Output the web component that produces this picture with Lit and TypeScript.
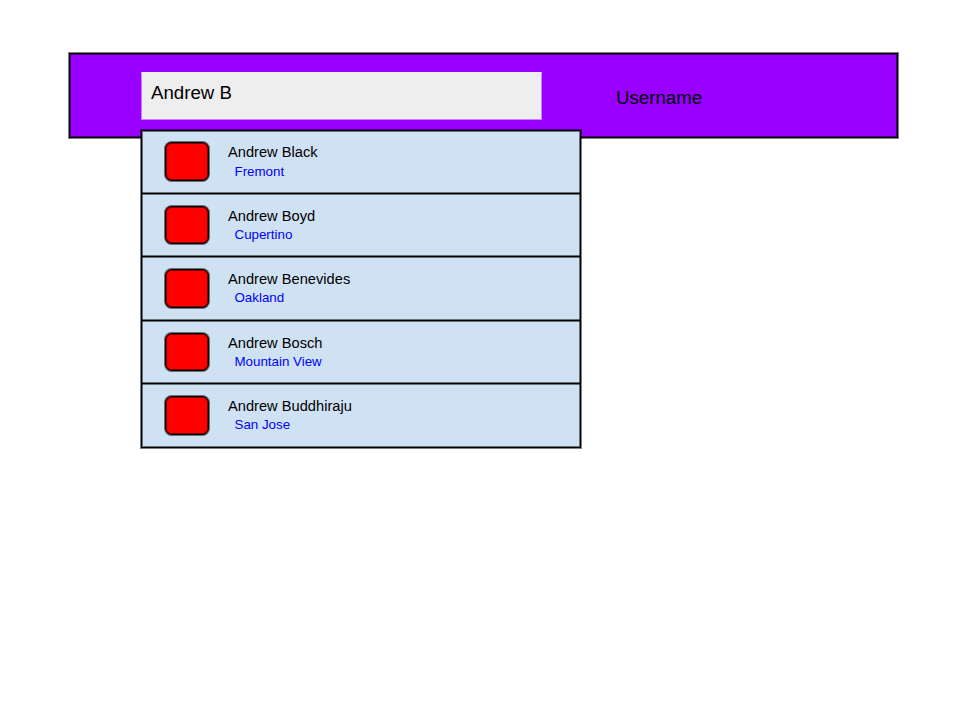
import { LitElement, html, css } from "lit";
import { customElement, property } from "lit/decorators.js";

interface Person {
  name: string;
  city: string;
}

@customElement("person-row")
export class PersonRow extends LitElement {
  @property() name = "";
  @property() city = "";

  static styles = css`
    :host {
      display: flex;
      box-sizing: border-box;
      align-items: flex-start;
      padding: 12px 0 0 23px;
      gap: 19px;
      border-bottom: 1px solid #000;
      box-shadow: 0 1px 0 rgba(0, 0, 0, 0.5), inset 0 -1px 0 rgba(0, 0, 0, 0.5);
    }
    :host(:first-child) {
      padding-top: 11px;
    }
    :host(:first-child) .name {
      margin-bottom: 1px;
    }
    .avatar {
      box-sizing: border-box;
      width: 44px;
      height: 39px;
      background: #f00;
      border: 1px solid #000;
      border-radius: 6.5px;
      box-shadow: 0 0 0 1px rgba(0, 0, 0, 0.5), inset 0 0 0 1px rgba(0, 0, 0, 0.5);
    }
    :host(:nth-child(even)) .avatar {
      height: 38px;
    }
    .name {
      font-size: 14.67px;
      line-height: 20px;
      color: #000;
    }
    .city {
      margin-left: 6.5px;
      font-size: 13.33px;
      line-height: 18px;
      color: #00f;
    }
  `;

  render() {
    return html`
      <div class="avatar"></div>
      <div>
        <div class="name">${this.name}</div>
        <div class="city">${this.city}</div>
      </div>
    `;
  }
}

@customElement("app-root")
export class AppRoot extends LitElement {
  private people: Person[] = [
    { name: "Andrew Black", city: "Fremont" },
    { name: "Andrew Boyd", city: "Cupertino" },
    { name: "Andrew Benevides", city: "Oakland" },
    { name: "Andrew Bosch", city: "Mountain View" },
    { name: "Andrew Buddhiraju", city: "San Jose" },
  ];

  static styles = css`
    :host {
      display: block;
      box-sizing: border-box;
      width: 960px;
      height: 720px;
      padding: 53px 0 0 69px;
      background: #fff;
      font-family: "Liberation Sans", Arial, sans-serif;
      white-space: nowrap;
    }
    .bar {
      position: relative;
      box-sizing: border-box;
      display: flex;
      width: 829px;
      height: 85px;
      padding: 18px 0 0 71px;
      background: #90f;
      border: 1px solid #000;
      box-shadow: 0 0 0 1px rgba(0, 0, 0, 0.5), inset 0 0 0 1px rgba(0, 0, 0, 0.5);
    }
    .search {
      box-sizing: border-box;
      width: 401px;
      height: 48px;
      padding: 9px 0 0 9px;
      background: #eee;
      border: 1px solid #c683f7;
      border-top-color: #eee;
      font-size: 18.67px;
      line-height: 22px;
    }
    .user {
      margin: 15px 0 0 74px;
      font-size: 18.67px;
      line-height: 22px;
    }
    .menu {
      position: absolute;
      left: 71px;
      top: 76px;
      box-sizing: border-box;
      width: 440px;
      height: 318px;
      display: grid;
      grid-template-rows: 63px 63px 64px 63px 63px;
      background: #cfe2f3;
      border: 1px solid #000;
      box-shadow: 0 0 0 1px rgba(0, 0, 0, 0.5), inset 0 0 0 1px rgba(0, 0, 0, 0.5);
    }
    .menu person-row:last-child {
      border-bottom: 0;
      box-shadow: none;
    }
  `;

  render() {
    return html`
      <div class="bar">
        <div class="search">Andrew B</div>
        <div class="user">Username</div>
        <div class="menu">
          ${this.people.map(
            (p) => html`<person-row .name=${p.name} .city=${p.city}></person-row>`,
          )}
        </div>
      </div>
    `;
  }
}
